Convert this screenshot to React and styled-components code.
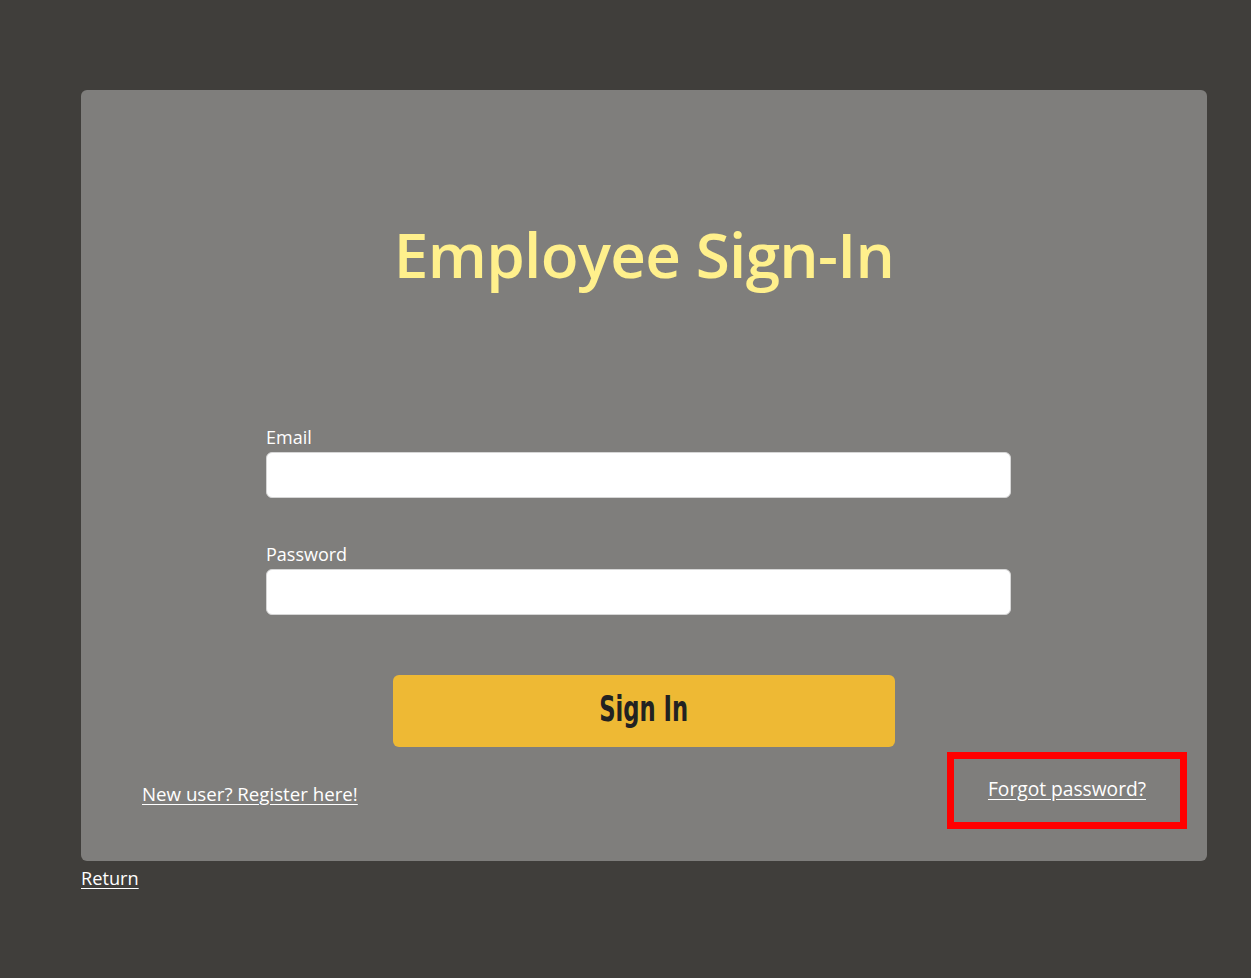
import React from 'react';
import styled, { createGlobalStyle } from 'styled-components';

const GlobalStyle = createGlobalStyle`
  html, body {
    margin: 0;
    padding: 0;
    background-color: #403e3b;
    font-family: "Open Sans", "Noto Sans", sans-serif;
  }
`;

const Page = styled.div`
  padding: 90px 44px 80px 81px;
`;

const Card = styled.div`
  width: 1126px;
  height: 771px;
  box-sizing: border-box;
  background-color: #7f7e7c;
  border-radius: 6px;
  padding-top: 124px;
  display: flex;
  flex-direction: column;
`;

const Title = styled.h1`
  margin: 0;
  text-align: center;
  color: #fff08c;
  font-size: 62px;
  font-weight: 600;
  line-height: 80px;
  letter-spacing: -0.7px;
`;

const Form = styled.form`
  width: 745px;
  margin: 131px 0 0 185px;
  display: flex;
  flex-direction: column;
`;

const Label = styled.label`
  color: #fff;
  font-size: 18px;
  line-height: 24px;
  margin-top: ${p => p.$gap || 0}px;
  margin-bottom: 3px;
`;

const Input = styled.input`
  height: 46px;
  box-sizing: border-box;
  border: 1px solid #d6d6d6;
  border-radius: 6px;
  background: #fff;
  font-size: 16px;
  padding: 0 12px;
  outline: none;
`;

const SubmitButton = styled.button`
  align-self: center;
  margin: 60px 0 0 11px;
  width: 502px;
  height: 72px;
  border: none;
  border-radius: 6px;
  background-color: #eeb934;
  display: flex;
  align-items: center;
  justify-content: center;
  padding: 0 0 5px;
  cursor: pointer;
`;

const ButtonText = styled.span`
  display: inline-block;
  color: #222222;
  font-family: "DejaVu Sans", sans-serif;
  font-weight: 700;
  font-size: 36px;
  line-height: 1;
  transform: scaleX(0.63);
`;

const Footer = styled.div`
  display: flex;
  justify-content: space-between;
  align-items: center;
  padding: 5px 20px 0 61px;
`;

const Link = styled.a`
  color: #fff;
  font-size: 18.7px;
  text-decoration: underline;
  text-underline-offset: 3px;
  cursor: pointer;
`;

const RegisterLink = styled(Link)`
  margin-top: 6px;
`;

const Highlight = styled.div`
  width: 240px;
  height: 77px;
  box-sizing: border-box;
  border: 7px solid #ff0000;
  display: flex;
  align-items: center;
  justify-content: center;
  padding-bottom: 4px;
`;

const ForgotLink = styled(Link)`
  font-size: 19.2px;
`;

const Return = styled(Link)`
  display: inline-block;
  margin-top: 5px;
  font-size: 18.2px;
`;

export default function App() {
  return (
    <>
      <GlobalStyle />
      <Page>
        <Card>
          <Title>Employee Sign-In</Title>
          <Form onSubmit={e => e.preventDefault()}>
            <Label htmlFor="email">Email</Label>
            <Input id="email" type="email" />
            <Label htmlFor="password" $gap={44}>Password</Label>
            <Input id="password" type="password" />
            <SubmitButton type="submit">
              <ButtonText>Sign In</ButtonText>
            </SubmitButton>
          </Form>
          <Footer>
            <RegisterLink>New user? Register here!</RegisterLink>
            <Highlight>
              <ForgotLink>Forgot password?</ForgotLink>
            </Highlight>
          </Footer>
        </Card>
        <Return>Return</Return>
      </Page>
    </>
  );
}
